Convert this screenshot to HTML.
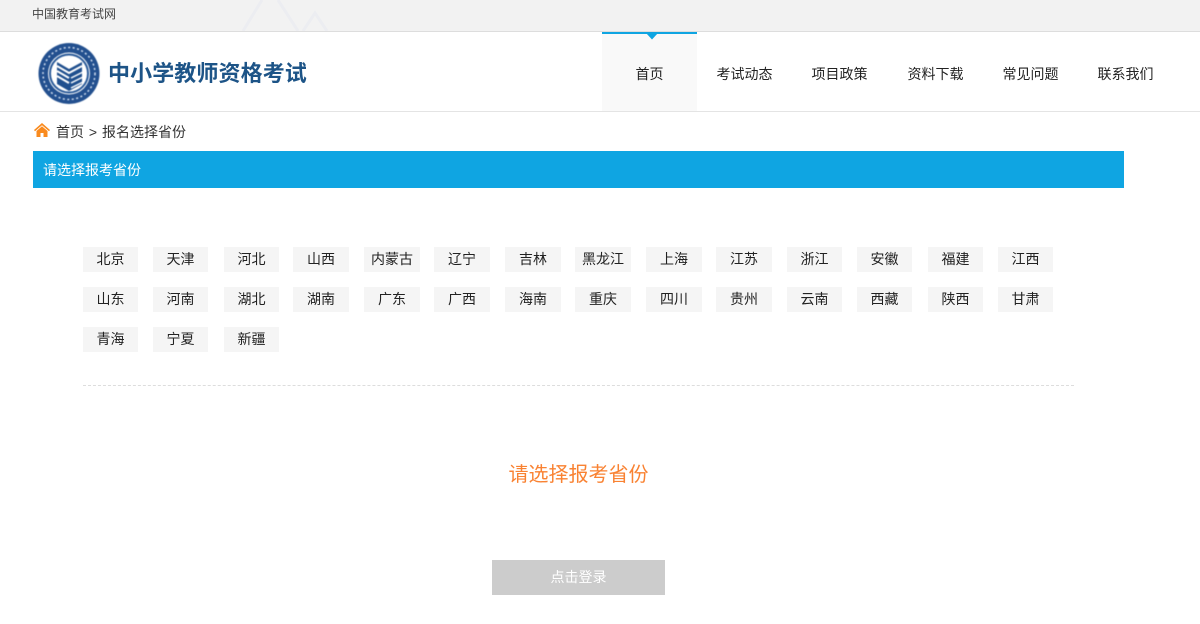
<!DOCTYPE html>
<html lang="zh"><head><meta charset="utf-8"><title>中小学教师资格考试</title>
<style>
html,body{margin:0;padding:0;background:#fff}
body{width:1200px;height:624px;position:relative;overflow:hidden;font-family:"Liberation Sans","Noto Sans CJK SC",sans-serif;color:#222}
.a{position:absolute;white-space:nowrap}
.n{position:absolute;top:62px;font-size:14px;line-height:24px;width:95px;text-align:center;color:#222}
.b{position:absolute;width:55px;height:25px;background:#f5f5f5;font-size:14px;line-height:25px;text-align:center;color:#222}
</style></head><body>
<div class="a" style="left:0;top:0;width:1200px;height:31px;background:#f2f2f2;border-bottom:1px solid #ddd"></div>
<svg class="a" style="left:230px;top:0" width="120" height="31" fill="none" stroke="#ecedf1" stroke-width="3"><path d="M13 31L32 0M48 0L68 31M73 31L85 13L97 31"/></svg>
<div class="a" style="left:32px;top:6px;font-size:12px;line-height:16px;color:#444">中国教育考试网</div>

<svg class="a" style="left:38px;top:42px;filter:blur(.4px)" width="64" height="64" viewBox="0 0 64 64">
<circle cx="31" cy="31.500" r="30.500" fill="#23508f"/>
<circle cx="31" cy="31.500" r="21" fill="#fff"/>
<circle cx="31" cy="31.500" r="19" fill="#fff" stroke="#2a5a99" stroke-width="2"/>
<path d="M19 20L31 27L44 20V42L31 49L19 42Z" fill="#1f4f8e"/>
<path d="M19 24L31 31L44 24M19 29L31 36M19 34L31 41" stroke="#fff" stroke-width="2" fill="none"/>
<path d="M33 36L45 30M33 41L45 35M33 46L45 40" stroke="#fff" stroke-width="1.500" fill="none"/>
<circle cx="31" cy="31.500" r="26" fill="none" stroke="#cfdcee" stroke-width="1.500" stroke-dasharray="2 2.500"/>
</svg>
<div class="a" style="left:108px;top:59px;font-size:22px;line-height:30px;font-weight:700;color:#1d5487;letter-spacing:.1px">中小学教师资格考试</div>

<div class="a" style="left:602px;top:32px;width:95px;height:79px;background:#f9f9f9"></div>
<div class="a" style="left:602px;top:32px;width:95px;height:2px;background:#0fa5e2"></div>
<svg class="a" style="left:646px;top:33px" width="13" height="7"><path d="M0 0H12L6 6.500Z" fill="#0fa5e2"/></svg>
<div class="n" style="left:602px">首页</div>
<div class="n" style="left:697px">考试动态</div>
<div class="n" style="left:792px">项目政策</div>
<div class="n" style="left:888px">资料下载</div>
<div class="n" style="left:983px">常见问题</div>
<div class="n" style="left:1078px">联系我们</div>
<div class="a" style="left:0;top:111px;width:1200px;height:1px;background:#e4e4e4"></div>

<svg class="a" style="left:34px;top:123px" width="16" height="14" viewBox="0 0 16 14"><path d="M8 0L0 7L1 8.200L8 2.200L15 8.200L16 7Z" fill="#f98a1d"/><path d="M2.500 8L8 3.300L13.500 8V14H9.500V10H6.500V14H2.500Z" fill="#f98a1d"/></svg>
<div class="a" style="left:56px;top:123px;font-size:14px;line-height:18px;color:#333;word-spacing:1px">首页 &gt; 报名选择省份</div>

<div class="a" style="left:33px;top:151px;width:1091px;height:37px;background:#0fa5e2"></div>
<div class="a" style="left:43px;top:160px;font-size:14px;line-height:20px;color:#fff">请选择报考省份</div>

<div class="b" style="left:83px;top:247px">北京</div>
<div class="b" style="left:153px;top:247px">天津</div>
<div class="b" style="left:224px;top:247px">河北</div>
<div class="b" style="left:293px;top:247px;width:56px">山西</div>
<div class="b" style="left:364px;top:247px;width:56px">内蒙古</div>
<div class="b" style="left:434px;top:247px;width:56px">辽宁</div>
<div class="b" style="left:505px;top:247px;width:56px">吉林</div>
<div class="b" style="left:575px;top:247px;width:56px">黑龙江</div>
<div class="b" style="left:646px;top:247px;width:56px">上海</div>
<div class="b" style="left:716px;top:247px;width:56px">江苏</div>
<div class="b" style="left:787px;top:247px">浙江</div>
<div class="b" style="left:857px;top:247px">安徽</div>
<div class="b" style="left:928px;top:247px">福建</div>
<div class="b" style="left:998px;top:247px">江西</div>

<div class="b" style="left:83px;top:287px">山东</div>
<div class="b" style="left:153px;top:287px">河南</div>
<div class="b" style="left:224px;top:287px">湖北</div>
<div class="b" style="left:293px;top:287px;width:56px">湖南</div>
<div class="b" style="left:364px;top:287px;width:56px">广东</div>
<div class="b" style="left:434px;top:287px;width:56px">广西</div>
<div class="b" style="left:505px;top:287px;width:56px">海南</div>
<div class="b" style="left:575px;top:287px;width:56px">重庆</div>
<div class="b" style="left:646px;top:287px;width:56px">四川</div>
<div class="b" style="left:716px;top:287px;width:56px">贵州</div>
<div class="b" style="left:787px;top:287px">云南</div>
<div class="b" style="left:857px;top:287px">西藏</div>
<div class="b" style="left:928px;top:287px">陕西</div>
<div class="b" style="left:998px;top:287px">甘肃</div>

<div class="b" style="left:83px;top:327px">青海</div>
<div class="b" style="left:153px;top:327px">宁夏</div>
<div class="b" style="left:224px;top:327px">新疆</div>

<div class="a" style="left:83px;top:385px;width:991px;height:0;border-top:1px dashed #ddd"></div>
<div class="a" style="left:83px;top:462px;width:991px;text-align:center;font-size:20px;line-height:26px;color:#f98232">请选择报考省份</div>
<div class="a" style="left:492px;top:560px;width:173px;height:35px;background:#ccc;color:#fff;font-size:14px;line-height:35px;text-align:center">点击登录</div>
</body></html>
